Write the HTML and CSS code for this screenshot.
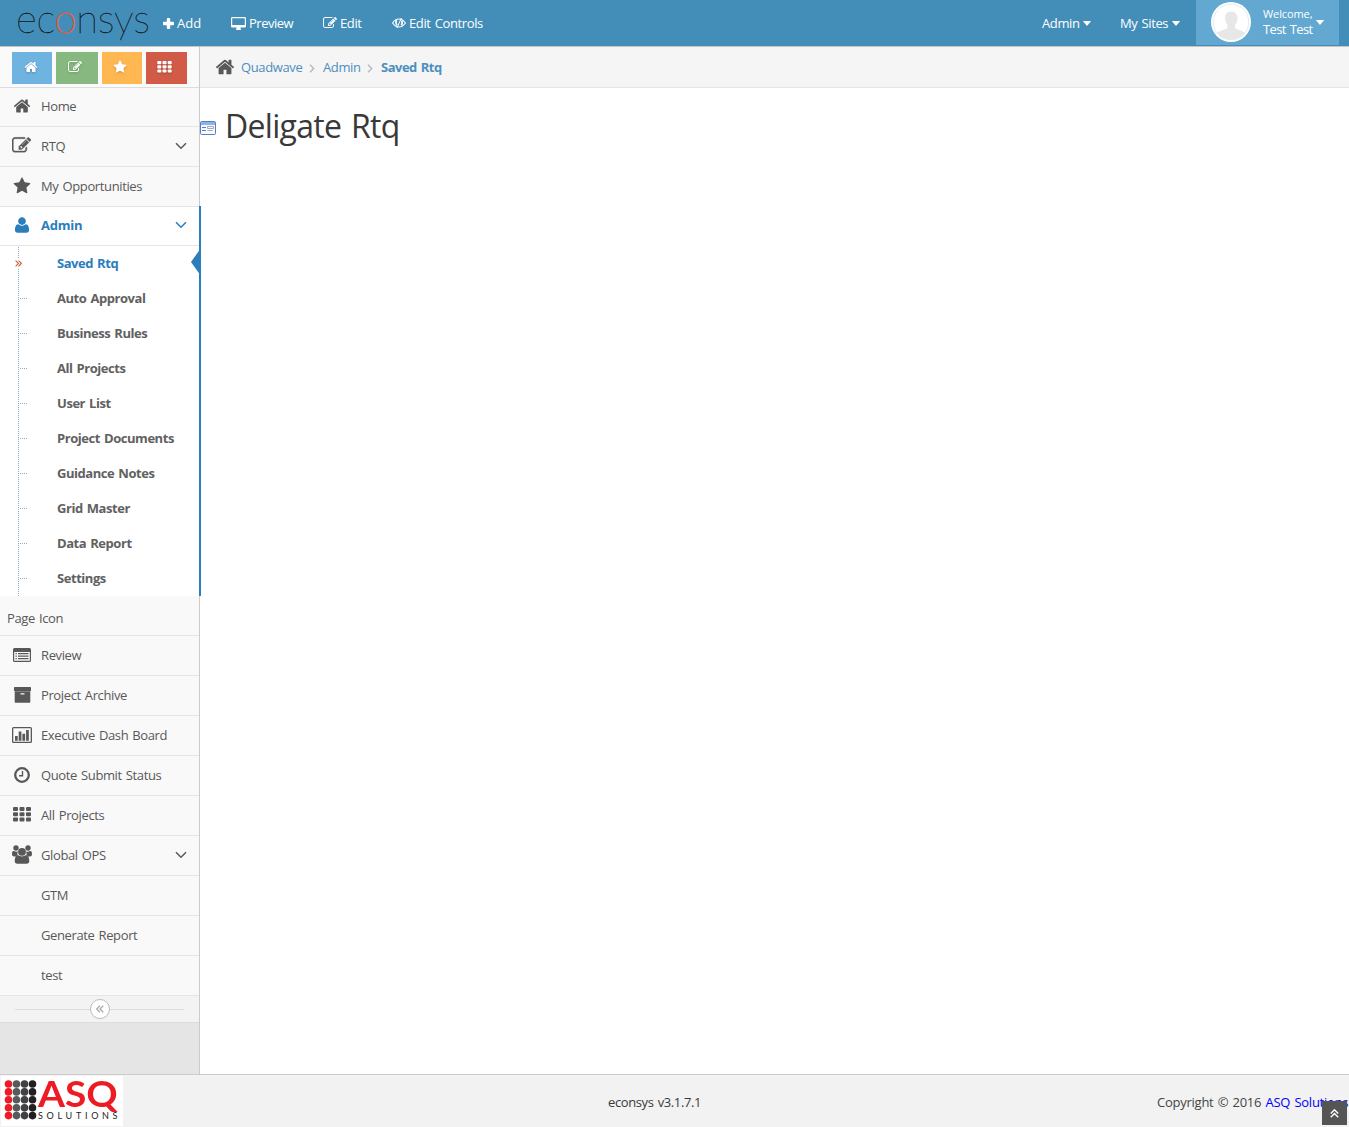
FILE: index.html
```html
<!DOCTYPE html>
<html lang="en">
<head>
<meta charset="utf-8">
<title>Deligate Rtq</title>
<link rel="stylesheet" href="styles.css">
</head>
<body>
<svg class="sprite" aria-hidden="true">
  <symbol id="home" viewBox="0 0 1792 1792"><path d="M1472 992v480q0 26-19 45t-45 19h-384v-384h-256v384h-384q-26 0-45-19t-19-45v-480q0-1 .5-3t.5-3l575-474 575 474q1 2 1 6zm223-69l-62 74q-8 9-21 11h-3q-13 0-21-7l-692-577-692 577q-12 8-24 7-13-2-21-11l-62-74q-8-10-7-23.5t11-21.5l719-599q32-26 76-26t76 26l244 204v-195q0-14 9-23t23-9h192q14 0 23 9t9 23v408l219 182q10 8 11 21.5t-7 23.5z"/></symbol>
  <symbol id="edit" viewBox="0 0 1792 1792"><path d="M888 1184l116-116-152-152-116 116v56h96v96h56zm440-720q-16-16-33 1l-350 350q-17 17-1 33t33-1l350-350q17-17 1-33zm80 594v190q0 119-84.5 203.5t-203.5 84.5h-832q-119 0-203.5-84.5t-84.5-203.5v-832q0-119 84.5-203.5t203.5-84.5h832q63 0 117 25 15 7 18 23 3 17-9 29l-49 49q-14 14-32 8-23-6-45-6h-832q-66 0-113 47t-47 113v832q0 66 47 113t113 47h832q66 0 113-47t47-113v-126q0-13 9-22l64-64q15-15 35-7t20 29zm-96-738l288 288-672 672h-288v-288zm444 132l-92 92-288-288 92-92q28-28 68-28t68 28l152 152q28 28 28 68t-28 68z"/></symbol>
  <symbol id="star" viewBox="0 0 1792 1792"><path d="M1728 647q0 22-26 48l-363 354 86 500q1 7 1 20 0 21-10.5 35.5t-30.5 14.5q-19 0-40-12l-449-236-449 236q-22 12-40 12-21 0-31.5-14.5t-10.5-35.5q0-6 2-20l86-500-364-354q-25-27-25-48 0-37 56-46l502-73 225-455q19-41 49-41t49 41l225 455 502 73q56 9 56 46z"/></symbol>
  <symbol id="user" viewBox="0 0 1792 1792"><path d="M1600 1405q0 120-73 189.500t-194 69.500h-874q-121 0-194-69.500t-73-189.500q0-53 3.500-103.500t14-109 26.500-108.500 43-97.500 62-81 85.500-53.500 111.500-20q9 0 42 21.500t74.500 48 108 48 133.500 21.500 133.500-21.500 108-48 74.500-48 42-21.500q61 0 111.500 20t85.500 53.500 62 81 43 97.500 26.500 108.500 14 109 3.500 103.500zm-320-893q0 159-112.500 271.500t-271.500 112.500-271.500-112.500-112.500-271.500 112.500-271.500 271.500-112.500 271.500 112.500 112.500 271.500z"/></symbol>
  <symbol id="th" viewBox="0 0 18 15"><path d="M1 0h3q1 0 1 1v2q0 1-1 1h-3q-1 0-1-1v-2q0-1 1-1zm6.500 0h3q1 0 1 1v2q0 1-1 1h-3q-1 0-1-1v-2q0-1 1-1zm6.500 0h3q1 0 1 1v2q0 1-1 1h-3q-1 0-1-1v-2q0-1 1-1zM1 5.250h3q1 0 1 1v2q0 1-1 1h-3q-1 0-1-1v-2q0-1 1-1zm6.500 0h3q1 0 1 1v2q0 1-1 1h-3q-1 0-1-1v-2q0-1 1-1zm6.500 0h3q1 0 1 1v2q0 1-1 1h-3q-1 0-1-1v-2q0-1 1-1zM1 10.500h3q1 0 1 1v2q0 1-1 1h-3q-1 0-1-1v-2q0-1 1-1zm6.500 0h3q1 0 1 1v2q0 1-1 1h-3q-1 0-1-1v-2q0-1 1-1zm6.500 0h3q1 0 1 1v2q0 1-1 1h-3q-1 0-1-1v-2q0-1 1-1z"/></symbol>
  <symbol id="plus" viewBox="0 0 11 11"><path d="M4.700 0h1.600q.9 0 .9.900v2.900h2.900q.9 0 .9.900v1.600q0 .9-.9.900h-2.900v2.900q0 .9-.9.900h-1.600q-.9 0-.9-.9v-2.900h-2.900q-.9 0-.9-.9v-1.600q0-.9.900-.9h2.900v-2.900q0-.9.900-.9z"/></symbol>
  <symbol id="desktop" viewBox="0 0 15 13"><path fill-rule="evenodd" d="M1.300 0h12.400q1.300 0 1.300 1.300v7.900q0 1.300-1.300 1.300h-4.400q0 .8.600 1.400v.6q0 .5-.5.500h-3.800q-.5 0-.5-.5v-.6q.6-.6.600-1.400h-4.400q-1.300 0-1.300-1.300v-7.900q0-1.300 1.300-1.300zM1.200 1.200v6.800h12.600v-6.800z"/></symbol>
  <symbol id="eye" viewBox="0 0 14 12"><g fill="none" stroke="currentColor"><path d="M.6 6Q3.200 2 7 2t6.400 4Q10.800 10 7 10T.6 6z" stroke-width="1.200"/><path d="M9.300 1L5 11" stroke-width="1"/><path d="M4.600 3.200Q3.200 5.700 5 8.200M9.600 3.600Q11 6 9.300 8.300" stroke-width="1.700"/></g></symbol>
  <symbol id="caret" viewBox="0 0 8 5"><path d="M.5 0h7q.8 0 .3.600L4.400 4.600q-.4.400-.8 0L.2.600Q-.3 0 .5 0z"/></symbol>
  <symbol id="down" viewBox="0 0 12 8"><path d="M1 1.300l5 4.900 5-4.900" fill="none" stroke="currentColor" stroke-width="1.500"/></symbol>
  <symbol id="right" viewBox="0 0 6 9"><path d="M1 .7l3.700 3.800L1 8.300" fill="none" stroke="currentColor" stroke-width="1.300"/></symbol>
  <symbol id="double" viewBox="0 0 8 8"><path d="M.7.700L4 4 .7 7.300M4 .7L7.300 4 4 7.300" fill="none" stroke="currentColor" stroke-width="1.250"/></symbol>
  <symbol id="list" viewBox="0 0 18 14"><path fill-rule="evenodd" d="M1.500 0h15q1.500 0 1.500 1.500v11q0 1.500-1.500 1.500h-15Q0 14 0 12.500v-11Q0 0 1.500 0zM1.200 4v8.800h15.600V4zM2.500 5h1.300v1.300H2.500zm2.500 0h10.500v1.300H5zM2.500 7.500h1.300v1.300H2.500zm2.500 0h10.500v1.300H5zM2.500 10h1.300v1.300H2.500zm2.500 0h10.500v1.300H5z"/></symbol>
  <symbol id="archive" viewBox="0 0 17 16"><path fill-rule="evenodd" d="M.6 0h15.800q.6 0 .6.600v3.400H0V.600Q0 0 .6 0zM.7 4.300h15.600v10.700q0 .8-.8.800h-14q-.8 0-.8-.8zM7 6.200q-.7 0-.7.650t.7.650h3q.7 0 .7-.65T10 6.200z"/></symbol>
  <symbol id="chart" viewBox="0 0 20 16"><path fill-rule="evenodd" d="M1.500 0h17Q20 0 20 1.500v13q0 1.500-1.500 1.500h-17Q0 16 0 14.500v-13Q0 0 1.500 0zM1.300 1.300v13.400h17.400V1.300zM3 9h2.700v4.700H3zm3.700-4.500h2.700v9.200H6.700zm3.700 2.200h2.700v7h-2.700zm3.700-3.800h2.700v10.800h-2.700z"/></symbol>
  <symbol id="clock" viewBox="0 0 16 16"><g fill="none" stroke="currentColor"><circle cx="8" cy="8" r="6.800" stroke-width="2.300"/><path d="M8.500 4v4.700H5" stroke-width="1.400"/></g></symbol>
  <symbol id="users" viewBox="0 0 20 19"><circle cx="4" cy="3" r="2.700"/><circle cx="16" cy="3" r="2.700"/><path d="M2 6q2 1.300 4 .5-1.200 2 0 4-1.200.2-2 1H2Q0 11.500 0 9.300 0 6 1.400 6zM18 6q-2 1.300-4 .5 1.200 2 0 4 1.200.2 2 1h2q2 0 2-2.200Q20 6 18.600 6z"/><circle cx="10" cy="6.800" r="3.900"/><path d="M6.300 10.300Q10 12.600 13.700 10.300q3.600 0 3.600 5.700 0 2.800-2.800 2.800h-9q-2.800 0-2.800-2.800 0-5.700 3.600-5.700z"/></symbol>
</svg>
<header class="navbar">
  <div class="brand">ec<span>o</span>nsys</div>
  <nav class="tools">
    <a class="t-add"><svg class="i-plus"><use href="#plus"/></svg>Add</a>
    <a class="t-preview"><svg class="i-desktop"><use href="#desktop"/></svg>Preview</a>
    <a class="t-edit"><svg class="i-14"><use href="#edit"/></svg>Edit</a>
    <a class="t-controls"><svg class="i-eye"><use href="#eye"/></svg>Edit Controls</a>
  </nav>
  <nav class="account">
    <a class="t-admin">Admin<svg class="i-caret"><use href="#caret"/></svg></a>
    <a class="t-sites">My Sites<svg class="i-caret"><use href="#caret"/></svg></a>
    <a class="profile">
      <svg class="avatar" viewBox="0 0 40 40"><circle cx="20" cy="20" r="20" fill="#fff"/><circle cx="20" cy="20" r="17.800" fill="none" stroke="#d3e3ed" stroke-width=".7"/><path d="M6 31q2-2 9-4 2-.8 1.500-4-2-2-2.300-6-.8-7.500 6-7.500t6.300 7.500q-.3 4-2.500 6-.3 3.200 1.500 4 6.500 2 8.500 4-5.500 6.800-14 6.800T6 31z" fill="#e7e7e7"/></svg>
      <span class="greeting"><small>Welcome,</small><span>Test Test</span></span>
      <svg class="i-caret"><use href="#caret"/></svg>
    </a>
  </nav>
</header>
<div class="page">
  <aside class="sidebar">
    <div class="shortcuts">
      <a class="s-blue"><svg><use href="#home"/></svg></a>
      <a class="s-green"><svg><use href="#edit"/></svg></a>
      <a class="s-orange"><svg><use href="#star"/></svg></a>
      <a class="s-red"><svg class="i-grid"><use href="#th"/></svg></a>
    </div>
    <ul class="menu">
      <li class="item short"><svg class="ico"><use href="#home"/></svg><span>Home</span></li>
      <li class="item"><svg class="ico wide"><use href="#edit"/></svg><span>RTQ</span><svg class="arrow"><use href="#down"/></svg></li>
      <li class="item"><svg class="ico"><use href="#star"/></svg><span>My Opportunities</span></li>
      <li class="branch">
        <div class="item short current"><svg class="ico"><use href="#user"/></svg><span>Admin</span><svg class="arrow"><use href="#down"/></svg></div>
        <ul class="submenu">
          <li class="selected"><svg class="marker"><use href="#double"/></svg>Saved Rtq<svg class="pointer" viewBox="0 0 10 28"><path d="M10 0v28L0 14z" fill="#2b7dbc"/></svg></li>
          <li>Auto Approval</li>
          <li>Business Rules</li>
          <li>All Projects</li>
          <li>User List</li>
          <li>Project Documents</li>
          <li>Guidance Notes</li>
          <li>Grid Master</li>
          <li>Data Report</li>
          <li>Settings</li>
        </ul>
      </li>
      <li class="item plain"><span>Page Icon</span></li>
      <li class="item"><svg class="ico i-list"><use href="#list"/></svg><span>Review</span></li>
      <li class="item"><svg class="ico i-archive"><use href="#archive"/></svg><span>Project Archive</span></li>
      <li class="item"><svg class="ico i-chart"><use href="#chart"/></svg><span>Executive Dash Board</span></li>
      <li class="item"><svg class="ico i-clock"><use href="#clock"/></svg><span>Quote Submit Status</span></li>
      <li class="item"><svg class="ico i-th"><use href="#th"/></svg><span>All Projects</span></li>
      <li class="item"><svg class="ico i-users"><use href="#users"/></svg><span>Global OPS</span><svg class="arrow"><use href="#down"/></svg></li>
      <li class="item"><span class="bare">GTM</span></li>
      <li class="item"><span class="bare">Generate Report</span></li>
      <li class="item"><span class="bare">test</span></li>
    </ul>
    <div class="collapse"><b><svg><use href="#double"/></svg></b></div>
  </aside>
  <main>
    <nav class="crumbs">
      <svg class="i-home"><use href="#home"/></svg><a class="c-quad">Quadwave</a><svg class="sep"><use href="#right"/></svg><a class="c-admin">Admin</a><svg class="sep"><use href="#right"/></svg><strong>Saved Rtq</strong>
    </nav>
    <div class="heading">
      <svg viewBox="0 0 16 14"><rect x=".5" y=".5" width="15" height="13" rx="1" fill="#f5f9ff" stroke="#557fc4"/><path d="M1 1h14v3H1z" fill="#8cb2e8"/><path d="M2 6.500h4M2 9.500h4" stroke="#4f7fd0"/><path d="M7.500 5.500h6v2h-6zM7.500 9.500h5" fill="none" stroke="#aaa"/></svg>
      <h1>Deligate Rtq</h1>
    </div>
  </main>
</div>
<footer class="footer">
  <div class="asq">
    <svg class="dots" viewBox="0 0 36 50" fill="none" stroke-width="7.600" stroke-linecap="round" stroke-dasharray="0 7.900">
      <path d="M7.500 8v32" stroke="#ed1c24"/><path d="M15.500 8v32" stroke="#58595b"/><path d="M23.500 8v32" stroke="#414042"/><path d="M31.500 8v32" stroke="#231f20"/>
    </svg>
    <div class="wordmark"><b>ASQ</b><small>SOLUTIONS</small></div>
  </div>
  <span class="version">econsys v3.1.7.1</span>
  <span class="copy">Copyright © 2016 <a>ASQ Solutions</a></span>
  <a class="to-top"><svg><use href="#double"/></svg></a>
</footer>
</body>
</html>
```
FILE: styles.css
```css
* { box-sizing: border-box; }
body { margin: 0; height: 1127px; display: flex; flex-direction: column; overflow: hidden; background: #fff; color: #393939; font: 13px/20px "Open Sans", "Noto Sans", sans-serif; letter-spacing: -.38px; word-spacing: 1.1px; }
svg { fill: currentColor; flex: none; display: block; }
.sprite { width: 0; height: 0; position: absolute; }
ul { list-style: none; margin: 0; padding: 0; }

.navbar { height: 46px; flex: none; background: #438eb9; color: #fff; display: flex; justify-content: space-between; }
.brand { width: 146px; padding-left: 16px; font: 100 40px/37px Lato, sans-serif; letter-spacing: -.2px; color: #111; white-space: nowrap; -webkit-text-stroke: .3px #111; }
.brand span { color: #e8593c; -webkit-text-stroke: .9px #e8593c; }
.tools, .account { display: flex; }
.tools { margin-right: auto; }
.tools a, .account a { display: flex; align-items: center; height: 46px; white-space: nowrap; }
.tools a { gap: 3px; }
.t-add { width: 68px; margin-left: 17px; letter-spacing: 0; }
.t-preview { width: 92px; letter-spacing: -.5px; }
.t-edit { width: 69px; }
.i-plus { width: 11px; height: 11px; }
.i-desktop { width: 15px; height: 13px; }
.i-14 { width: 14px; height: 14px; }
.i-eye { width: 14px; height: 12px; }
.i-caret { width: 8px; height: 5px; }
.account a { gap: 3px; }
.t-admin { width: 78px; }
.t-sites { width: 76px; }
.t-sites svg { margin-left: 1px; }
.account .profile { width: 143px; height: 45px; margin-right: 10px; padding: 0 0 2px 15px; background: #62a8d1; gap: 0; }
.avatar { width: 40px; height: 40px; margin-right: 12px; }
.greeting { display: flex; flex-direction: column; line-height: 15px; width: 53px; letter-spacing: -.6px; }
.greeting small { font-size: 11px; line-height: 16px; letter-spacing: -.1px; }
.profile .i-caret { margin-top: 2px; }

.page { flex: 1; display: flex; min-height: 0; border-top: 1px solid #c5c5c5; }
.sidebar { width: 200px; flex: none; background: #e5e5e5; border-right: 1px solid #ccc; }
.shortcuts { height: 41px; display: flex; gap: 4px; padding: 5px 12px 3px; background: #fafafa; border-bottom: 1px solid #ddd; }
.shortcuts a { height: 32px; width: 40px; display: flex; justify-content: center; padding-top: 8px; color: #fff; }
.shortcuts svg { width: 14px; height: 14px; filter: drop-shadow(0 1px 1px rgba(0,0,0,.2)); }
.shortcuts .i-grid { width: 15px; height: 12px; margin: 1px 4px 0 0; }
.shortcuts .s-blue { background: #6fb3e0; padding-right: 3px; }
.shortcuts .s-green { background: #87b87f; width: 42px; padding-right: 4px; }
.shortcuts .s-orange { background: #ffb752; padding-right: 4px; }
.shortcuts .s-red { background: #d15b47; width: 41px; }

.item { height: 40px; display: flex; align-items: center; background: #f9f9f9; border-bottom: 1px solid #e5e5e5; color: #585858; white-space: nowrap; padding: 0 12px; }
.item.short { height: 39px; }
.item.plain { padding: 6px 7px 0; height: 40px; }
.item span { flex: 1; margin-top: -2px; }
.ico { width: 18px; height: 18px; margin: 0 10px 2px 1px; }
.ico.wide { width: 19px; height: 19px; margin: 0 10px 2px 0; stroke: currentColor; stroke-width: 30; }
.ico.i-list { width: 18px; height: 14px; }
.ico.i-archive { width: 17px; height: 16px; margin: 0 10px 2px 2px; }
.ico.i-chart { width: 20px; height: 16px; margin: 0 9px 2px 0; }
.ico.i-clock { width: 16px; height: 16px; margin: 0 11px 2px 2px; }
.ico.i-th { width: 18px; height: 15px; margin: 0 10px 3px 1px; }
.ico.i-users { width: 20px; height: 19px; margin: 0 9px 2px 0; }
.item .bare { padding-left: 29px; }
.arrow { width: 12px; height: 8px; margin-top: -2px; }
.branch { width: 201px; position: relative; border-right: 2px solid #2b7dbc; margin-top: -1px; padding-top: 1px; background: linear-gradient(#e5e5e5 1px, #fff 1px); }
.item.current { background: #fff; color: #2b7dbc; font-weight: 700; letter-spacing: -.25px; }
.submenu { position: relative; height: 350px; background: #fff; font-weight: 700; color: #616161; letter-spacing: -.45px; }
.submenu::before { content: ""; position: absolute; left: 18px; top: 1px; bottom: 0; border-left: 1px dotted #8aafce; }
.submenu li { position: relative; height: 35px; line-height: 35px; padding-left: 57px; }
.submenu li:not(.selected)::before { content: ""; position: absolute; left: 20px; top: 17px; width: 7px; border-top: 1px dotted #8aafce; }
.submenu .selected { color: #2b7dbc; }
.marker { position: absolute; left: 15px; top: 13px; width: 7px; height: 9px; color: #c86139; background: #fff; }
.pointer { position: absolute; right: -2px; top: 2px; width: 10px; height: 28px; }
.collapse { height: 27px; background: #f3f3f3; border-bottom: 1px solid #ddd; display: flex; align-items: center; padding: 0 15px; }
.collapse::before, .collapse::after { content: ""; flex: 1; height: 1px; background: #ddd; }
.collapse b { width: 20px; height: 20px; border: 1px solid #bbb; border-radius: 50%; background: #fff; color: #aaa; display: grid; place-items: center; }
.collapse svg { width: 8px; height: 8px; transform: rotate(180deg); }

main { flex: 1; min-width: 0; }
.crumbs { height: 41px; display: flex; align-items: center; background: #f5f5f5; border-bottom: 1px solid #e5e5e5; padding-left: 15px; color: #4c8fbd; white-space: nowrap; }
.crumbs strong { letter-spacing: -.5px; }
.i-home { width: 20px; height: 20px; margin: 0 6px 1px 0; color: #585858; }
.c-quad { width: 68px; }
.c-admin { width: 44px; }
.sep { width: 6px; height: 9px; color: #b2b6bf; margin-right: 8px; margin-top: 2px; }
.heading { display: flex; align-items: center; gap: 9px; height: 75px; }
.heading svg { width: 16px; height: 14px; margin-top: 5px; }
h1 { margin: 0; font-weight: 400; font-size: 32px; line-height: 40px; letter-spacing: -.7px; word-spacing: 2px; }

.footer { position: relative; height: 53px; flex: none; background: #f2f2f2; border-top: 1px solid #ccc; display: flex; align-items: center; white-space: nowrap; }
.asq { display: flex; width: 122px; height: 50px; margin-left: 1px; background: #fff; }
.dots { width: 36px; height: 50px; }
.wordmark { display: flex; flex-direction: column; padding: 1px 0 0 1px; word-spacing: 0; }
.wordmark b { font: 700 36px/33px Lato, sans-serif; letter-spacing: 0; color: #ed1c24; transform: scaleX(1.08); transform-origin: 0 0; align-self: flex-start; }
.wordmark small { font: 400 9px/12px Lato, sans-serif; letter-spacing: 3.7px; color: #222; }
.version { margin-left: 485px; width: 549px; padding-top: 2px; }
.copy { padding-top: 2px; color: #444; letter-spacing: -.25px; }
.copy a { color: #00f; }
.to-top { position: absolute; right: 2px; bottom: 2px; width: 25px; height: 24px; background: #555; color: #fff; display: grid; place-items: center; }
.to-top svg { width: 9px; height: 9px; transform: rotate(-90deg); }
```
